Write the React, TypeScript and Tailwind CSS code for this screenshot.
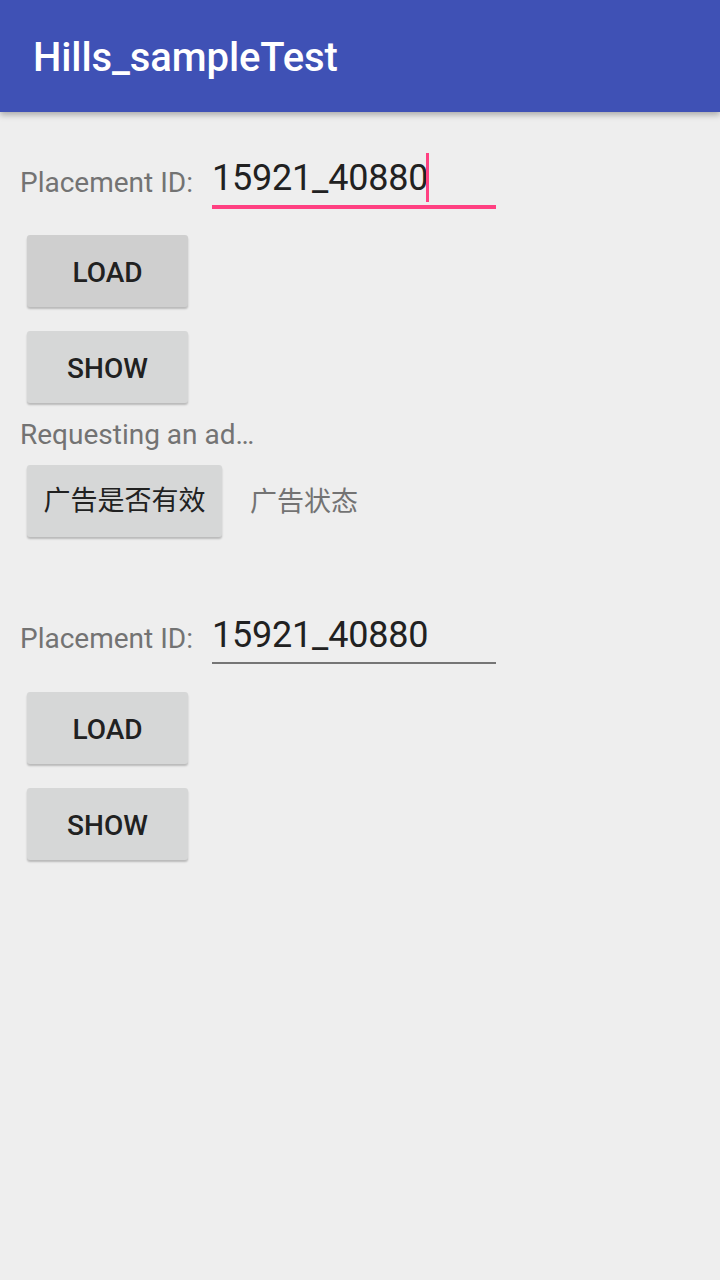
import React from 'react';

const font = { fontFamily: 'Roboto, "Noto Sans CJK SC", sans-serif' };

const Button: React.FC<{ label: string; pressed?: boolean; cjk?: boolean; className?: string }> = ({ label, pressed, cjk, className }) => (
  <div
    className={`ml-[7px] h-[72px] ${cjk ? 'w-[195px] font-normal text-[27px]' : 'w-[161px] font-medium text-[28px] pt-[3px]'} rounded-[3px] ${pressed ? 'bg-[#cfcfcf]' : 'bg-[#d6d7d7]'} shadow-[0_2px_2px_rgba(0,0,0,0.22)] flex items-center justify-center text-[#212121] ${className ?? ''}`}
  >
    {label}
  </div>
);

const PlacementRow: React.FC<{ focused?: boolean; className?: string }> = ({ focused, className }) => (
  <div className={`flex items-center ${className ?? ''}`}>
    <span className="pt-[7px] text-[28px] leading-[40px] text-[#737373]">Placement ID:</span>
    <div
      className={`ml-[19px] w-[284px] h-[55px] box-content flex items-center text-[36px] leading-[44px] tracking-[-0.2px] text-[#212121] ${
        focused ? 'border-b-4 border-[#ff4081]' : 'border-b-2 border-[#757575]'
      }`}
    >
      <span>15921_40880</span>
      {focused && <span className="ml-[-2px] inline-block w-[3px] h-[49px] bg-[#ff4081]" />}
    </div>
  </div>
);

export default function App() {
  return (
    <div className="w-[720px] h-[1280px] bg-[#eeeeee] overflow-hidden" style={font}>
      <div className="h-[112px] bg-[#3f51b5] px-[33px] flex items-center shadow-[0_3px_6px_rgba(0,0,0,0.28)] relative">
        <span className="pt-[3px] text-[40px] font-medium tracking-[-0.1px] text-white">Hills_sampleTest</span>
      </div>
      <div className="px-[20px]">
        <PlacementRow focused className="mt-[38px]" />
        <Button label="LOAD" pressed className="mt-[26px]" />
        <Button label="SHOW" className="mt-[24px]" />
        <div className="mt-[12px] text-[28px] leading-[40px] text-[#737373]">Requesting an ad…</div>
        <div className="mt-[10px] flex items-center">
          <Button label="广告是否有效" cjk />
          <span className="ml-[28px] pt-[2px] text-[27px] leading-[40px] text-[#737373]">广告状态</span>
        </div>
        <PlacementRow className="mt-[70px]" />
        <Button label="LOAD" className="mt-[28px]" />
        <Button label="SHOW" className="mt-[24px]" />
      </div>
    </div>
  );
}
